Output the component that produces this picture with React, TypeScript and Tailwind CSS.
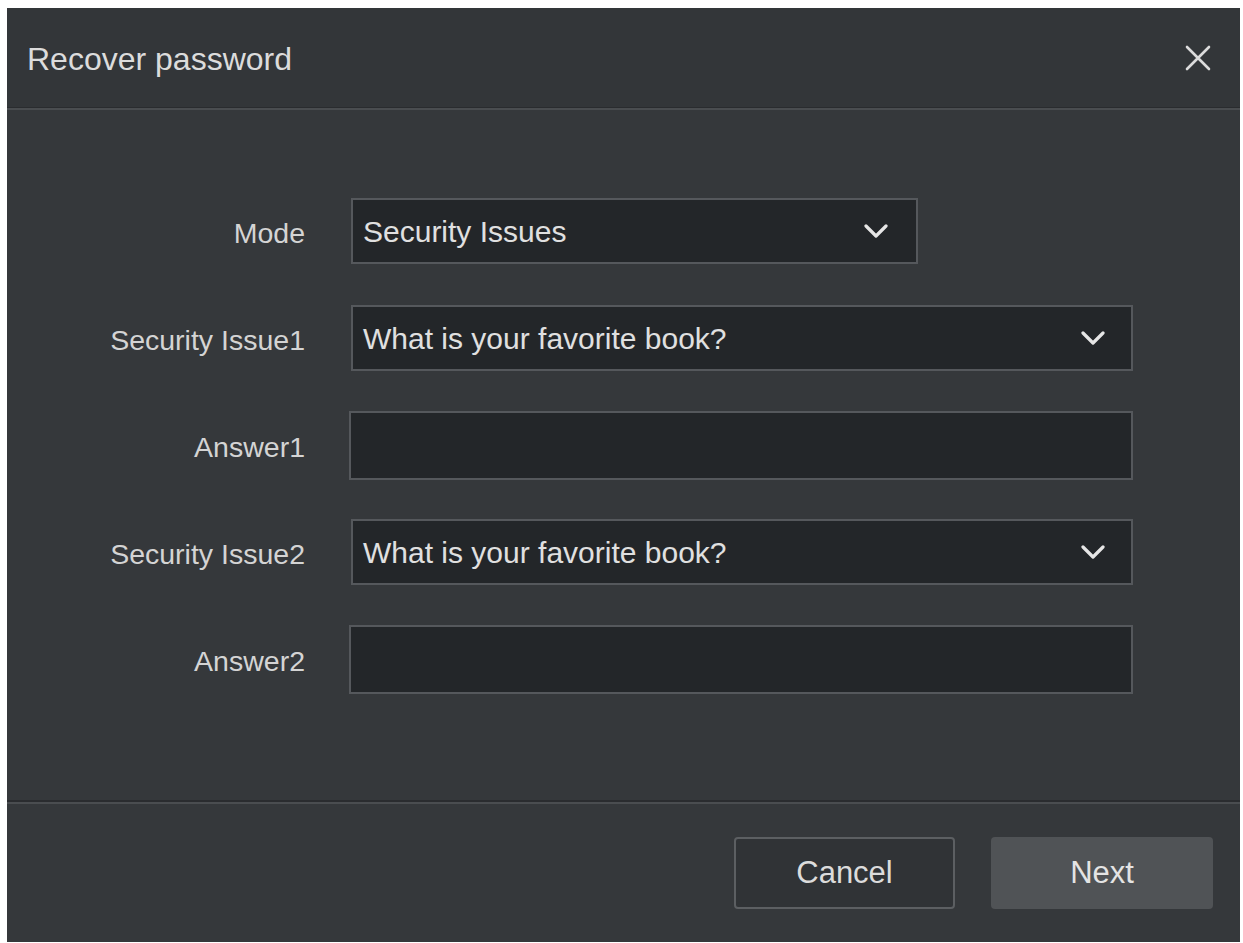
import React from 'react';

const FONT = { fontFamily: '"Liberation Sans", Arial, sans-serif' };

function Chevron() {
  return (
    <svg width="24" height="14" viewBox="0 0 24 14" fill="none" className="shrink-0">
      <path d="M2 2l10 10L22 2" stroke="#e6e6e6" strokeWidth="3.2" strokeLinecap="round" strokeLinejoin="round" />
    </svg>
  );
}

function CloseIcon() {
  return (
    <svg width="28" height="28" viewBox="0 0 28 28" fill="none">
      <path d="M3 3l22 22M25 3L3 25" stroke="#dcdcdc" strokeWidth="2.6" strokeLinecap="round" />
    </svg>
  );
}

function Row({ label, children }: { label: string; children: React.ReactNode }) {
  return (
    <div className="flex items-center h-[68px]">
      <div className="w-[298px] text-right text-[28.5px] text-[#d4d4d4] pt-[4px]">{label}</div>
      <div className="ml-[46px]">{children}</div>
    </div>
  );
}

function Select({ value, width, chevronGap }: { value: string; width: string; chevronGap: string }) {
  return (
    <div className={`${width} h-[66px] border-2 border-[#55585c] bg-[#232629] flex items-center pl-[10px] ${chevronGap}`}>
      <span className="flex-1 text-[30px] text-[#e0e0e0]">{value}</span>
      <Chevron />
    </div>
  );
}

function Input() {
  return <div className="w-[784px] h-[69px] -ml-[2px] border-2 border-[#55585c] bg-[#232629]" />;
}

export default function App() {
  return (
    <div className="w-[1243px] h-[943px] bg-white pl-[7px] pt-[8px] pr-[3px] pb-[1px]" style={FONT}>
      <div className="w-full h-full bg-[#35383b] flex flex-col">
        <div className="h-[99px] flex items-center justify-between pl-[20px] pr-[28px] bg-[#333639]">
          <span className="text-[32px] text-[#dcdcdc] pt-[3px]">Recover password</span>
          <CloseIcon />
        </div>
        <div className="h-[1px] bg-[#2a2c2f]" />
        <div className="h-[2px] bg-[#4a4d50]" />

        <div className="flex-1 flex flex-col gap-[39px] pt-[87px]">
          <Row label="Mode">
            <Select value="Security Issues" width="w-[567px]" chevronGap="pr-[28px]" />
          </Row>
          <Row label="Security Issue1">
            <Select value="What is your favorite book?" width="w-[782px]" chevronGap="pr-[26px]" />
          </Row>
          <Row label="Answer1">
            <Input />
          </Row>
          <Row label="Security Issue2">
            <Select value="What is your favorite book?" width="w-[782px]" chevronGap="pr-[26px]" />
          </Row>
          <Row label="Answer2">
            <Input />
          </Row>
        </div>

        <div className="h-[2px] bg-[#2a2c2f]" />
        <div className="h-[2px] bg-[#4a4d50]" />
        <div className="h-[138px] flex items-center justify-end gap-[36px] pr-[27px]">
          <button
            type="button"
            className="w-[221px] h-[72px] rounded-[4px] border-2 border-[#5c5f62] bg-[#303336] text-[31px] text-[#dcdcdc]"
          >
            Cancel
          </button>
          <button
            type="button"
            className="w-[222px] h-[72px] rounded-[4px] bg-[#505356] text-[31px] text-[#e4e4e4]"
          >
            Next
          </button>
        </div>
      </div>
    </div>
  );
}
